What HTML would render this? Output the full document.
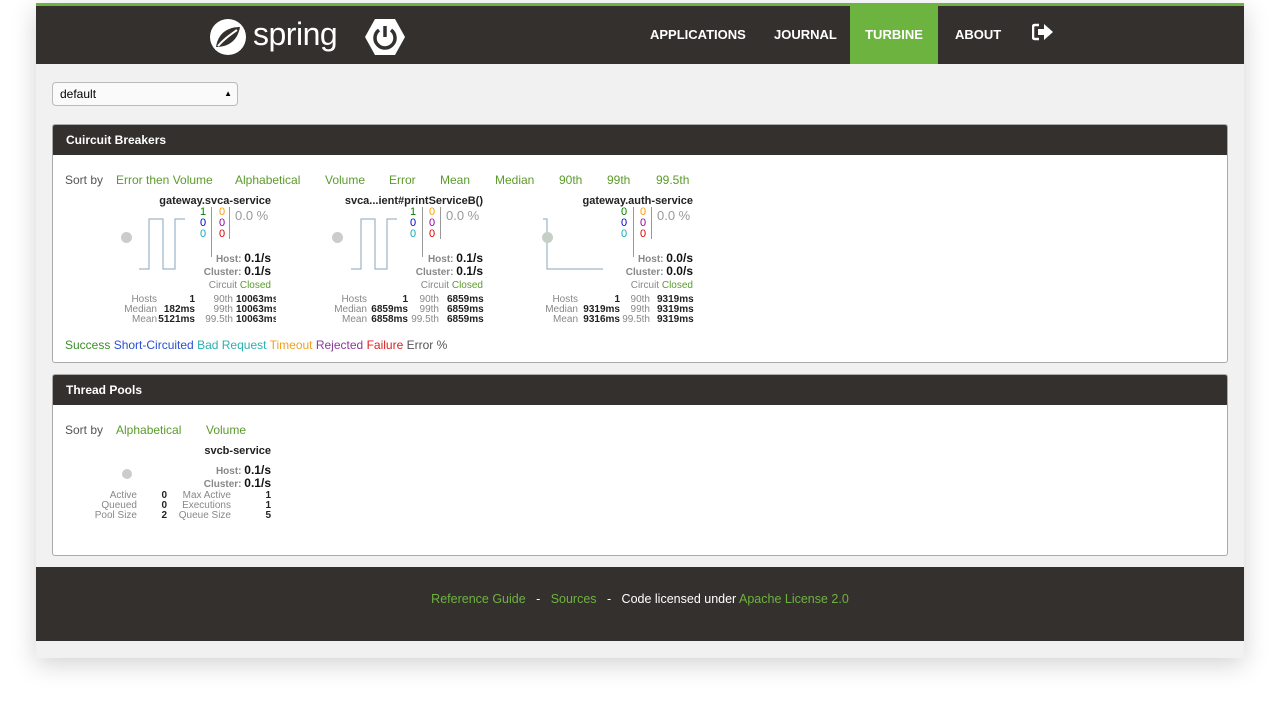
<!DOCTYPE html>
<html><head><style>
*{margin:0;padding:0;box-sizing:border-box}
body{width:1280px;height:701px;background:#fff;font-family:"Liberation Sans",sans-serif;position:relative;overflow:hidden}
.win{position:absolute;left:36px;top:3px;width:1208px;height:655px;background:#f1f1f1;box-shadow:0 6px 24px rgba(0,0,0,.18)}
.green{position:absolute;left:0;top:0;width:1208px;height:3px;background:#6db33f}
.hdr{position:absolute;left:0;top:3px;width:1208px;height:58px;background:#34302d}
.nav{position:absolute;top:0;height:58px;line-height:58px;color:#fff;font-weight:bold;font-size:13px}
.panel{position:absolute;left:16px;width:1176px;background:#fff;border:1px solid #aaa;border-radius:3px;overflow:hidden}
.ph{height:30px;background:#34302d;color:#fff;font-weight:bold;font-size:12px;line-height:30px;padding-left:13px}
.t{position:absolute;font-size:11px;white-space:nowrap}
.g{color:#5a9b2a}
.gr{color:#888}
.b{font-weight:bold;color:#222}
.r{text-align:right}
.foot{position:absolute;left:0;top:564px;width:1208px;height:74px;background:#34302d;color:#fff;font-size:12.5px;text-align:center;line-height:64px}
.foot a{color:#6db33f;text-decoration:none}
.dot{position:absolute;width:11px;height:11px;border-radius:50%;background:#ccc}
</style></head><body>
<div class="win">
<div class="green"></div>
<div class="hdr">
 <svg style="position:absolute;left:172px;top:11px" width="40" height="40" viewBox="0 0 40 40"><circle cx="20" cy="20" r="18" fill="#fff"/><path d="M8 30 C10 16 20 10 32 10 C30 22 22 30 8 30Z" fill="#34302d"/><path d="M10 29 C16 22 22 18 29 13" stroke="#fff" stroke-width="2" fill="none"/></svg>
 <div style="position:absolute;left:217px;top:10px;color:#fff;font-size:32px;letter-spacing:-0.5px">spring</div>
 <svg style="position:absolute;left:329px;top:12px" width="40" height="38" viewBox="0 0 40 38"><polygon points="10,1 30,1 40,19 30,37 10,37 0,19" fill="#fff"/><path d="M14 12 A10 10 0 1 0 26 12" stroke="#34302d" stroke-width="3.5" fill="none"/><line x1="20" y1="8" x2="20" y2="19" stroke="#34302d" stroke-width="3.5"/></svg>
 <div class="nav" style="left:614px">APPLICATIONS</div>
 <div class="nav" style="left:738px">JOURNAL</div>
 <div class="nav" style="left:814px;width:88px;background:#6db33f;text-align:center">TURBINE</div>
 <div class="nav" style="left:919px">ABOUT</div>
 <svg style="position:absolute;left:996px;top:17px" width="22" height="18" viewBox="0 0 22 18"><path d="M7 2H3Q1 2 1 4V14Q1 16 3 16H7" stroke="#fff" stroke-width="2.5" fill="none"/><path d="M6 6H12V1L21 9L12 17V12H6Z" fill="#fff"/></svg>
</div>
<div style="position:absolute;left:16px;top:79px;width:186px;height:24px;border:1px solid #bbb;border-radius:4px;background:#fafafa;font-size:12px;line-height:22px;padding-left:7px">default<span style="position:absolute;right:5px;font-size:8px;top:0">▲<br></span></div>

<div class="panel" style="top:121px;height:239px">
 <div class="ph">Cuircuit Breakers</div>
 <div class="t gr" style="left:12px;top:48px;font-size:12px;color:#555">Sort by</div>
 <div class="t g" style="left:63px;top:48px;font-size:12px;word-spacing:0">Error then Volume</div>
 <div class="t g" style="left:182px;top:48px;font-size:12px">Alphabetical</div>
 <div class="t g" style="left:272px;top:48px;font-size:12px">Volume</div>
 <div class="t g" style="left:336px;top:48px;font-size:12px">Error</div>
 <div class="t g" style="left:387px;top:48px;font-size:12px">Mean</div>
 <div class="t g" style="left:442px;top:48px;font-size:12px">Median</div>
 <div class="t g" style="left:506px;top:48px;font-size:12px">90th</div>
 <div class="t g" style="left:554px;top:48px;font-size:12px">99th</div>
 <div class="t g" style="left:603px;top:48px;font-size:12px">99.5th</div>

 <!-- monitor 1 -->
 <div class="t b r" style="left:80px;width:138px;top:70px">gateway.svca-service</div>
 <div class="dot" style="left:68px;top:107px"></div>
 <svg style="position:absolute;left:86px;top:92px" width="46" height="54"><path d="M0 52H10V2H24V52H36V2H46" stroke="#8aa4bd" fill="none"/></svg>
 <div class="t" style="left:147px;top:82px;line-height:11px;font-size:11px"><span style="color:green">1</span><br><span style="color:#00c">0</span><br><span style="color:#1ab">0</span></div>
 <div style="position:absolute;left:158px;top:82px;width:1px;height:50px;background:#999"></div>
 <div class="t" style="left:166px;top:82px;line-height:11px"><span style="color:#f90">0</span><br><span style="color:#909">0</span><br><span style="color:#d00">0</span></div>
 <div style="position:absolute;left:176px;top:82px;width:1px;height:32px;background:#999"></div>
 <div class="t" style="left:182px;top:83px;font-size:13px;color:#999">0.0 %</div>
 <div class="t r" style="left:80px;width:138px;top:126px;font-size:10px;color:#888"><b>Host:</b> <b style="font-size:12px;color:#111">0.1/s</b></div>
 <div class="t r" style="left:80px;width:138px;top:139px;font-size:10px;color:#888"><b>Cluster:</b> <b style="font-size:12px;color:#111">0.1/s</b></div>
 <div class="t r" style="left:80px;width:138px;top:155px;font-size:10px;color:#888">Circuit <span class="g">Closed</span></div>
 <div class="t gr r" style="left:60px;width:44px;top:170px;font-size:10px;line-height:10px">Hosts<br>Median<br>Mean</div>
 <div class="t b r" style="left:104px;width:38px;top:170px;font-size:10px;line-height:10px">1<br>182ms<br>5121ms</div>
 <div class="t gr r" style="left:140px;width:40px;top:170px;font-size:10px;line-height:10px">90th<br>99th<br>99.5th</div>
 <div class="t b" style="left:183px;width:40px;overflow:hidden;top:170px;font-size:10px;line-height:10px">10063ms<br>10063ms<br>10063ms</div>

 <!-- monitor 2 -->
 <div class="t b r" style="left:280px;width:150px;top:70px">svca...ient#printServiceB()</div>
 <div class="dot" style="left:279px;top:107px"></div>
 <svg style="position:absolute;left:298px;top:92px" width="46" height="54"><path d="M0 52H10V2H24V52H36V2H46" stroke="#8aa4bd" fill="none"/></svg>
 <div class="t" style="left:357px;top:82px;line-height:11px"><span style="color:green">1</span><br><span style="color:#00c">0</span><br><span style="color:#1ab">0</span></div>
 <div style="position:absolute;left:369px;top:82px;width:1px;height:50px;background:#999"></div>
 <div class="t" style="left:376px;top:82px;line-height:11px"><span style="color:#f90">0</span><br><span style="color:#909">0</span><br><span style="color:#d00">0</span></div>
 <div style="position:absolute;left:387px;top:82px;width:1px;height:32px;background:#999"></div>
 <div class="t" style="left:393px;top:83px;font-size:13px;color:#999">0.0 %</div>
 <div class="t r" style="left:290px;width:140px;top:126px;font-size:10px;color:#888"><b>Host:</b> <b style="font-size:12px;color:#111">0.1/s</b></div>
 <div class="t r" style="left:290px;width:140px;top:139px;font-size:10px;color:#888"><b>Cluster:</b> <b style="font-size:12px;color:#111">0.1/s</b></div>
 <div class="t r" style="left:290px;width:140px;top:155px;font-size:10px;color:#888">Circuit <span class="g">Closed</span></div>
 <div class="t gr r" style="left:270px;width:44px;top:170px;font-size:10px;line-height:10px">Hosts<br>Median<br>Mean</div>
 <div class="t b r" style="left:310px;width:45px;top:170px;font-size:10px;line-height:10px">1<br>6859ms<br>6858ms</div>
 <div class="t gr r" style="left:346px;width:40px;top:170px;font-size:10px;line-height:10px">90th<br>99th<br>99.5th</div>
 <div class="t b" style="left:394px;top:170px;font-size:10px;line-height:10px">6859ms<br>6859ms<br>6859ms</div>

 <!-- monitor 3 -->
 <div class="t b r" style="left:500px;width:140px;top:70px">gateway.auth-service</div>
 <svg style="position:absolute;left:490px;top:92px" width="60" height="54"><path d="M0 2H4V52H60" stroke="#8aa4bd" fill="none"/></svg>
 <div class="dot" style="left:489px;top:107px;background:#c4d0c6"></div>
 <div class="t" style="left:568px;top:82px;line-height:11px"><span style="color:green">0</span><br><span style="color:#00c">0</span><br><span style="color:#1ab">0</span></div>
 <div style="position:absolute;left:580px;top:82px;width:1px;height:50px;background:#999"></div>
 <div class="t" style="left:587px;top:82px;line-height:11px"><span style="color:#f90">0</span><br><span style="color:#909">0</span><br><span style="color:#d00">0</span></div>
 <div style="position:absolute;left:598px;top:82px;width:1px;height:32px;background:#999"></div>
 <div class="t" style="left:604px;top:83px;font-size:13px;color:#999">0.0 %</div>
 <div class="t r" style="left:500px;width:140px;top:126px;font-size:10px;color:#888"><b>Host:</b> <b style="font-size:12px;color:#111">0.0/s</b></div>
 <div class="t r" style="left:500px;width:140px;top:139px;font-size:10px;color:#888"><b>Cluster:</b> <b style="font-size:12px;color:#111">0.0/s</b></div>
 <div class="t r" style="left:500px;width:140px;top:155px;font-size:10px;color:#888">Circuit <span class="g">Closed</span></div>
 <div class="t gr r" style="left:481px;width:44px;top:170px;font-size:10px;line-height:10px">Hosts<br>Median<br>Mean</div>
 <div class="t b r" style="left:522px;width:45px;top:170px;font-size:10px;line-height:10px">1<br>9319ms<br>9316ms</div>
 <div class="t gr r" style="left:557px;width:40px;top:170px;font-size:10px;line-height:10px">90th<br>99th<br>99.5th</div>
 <div class="t b" style="left:604px;top:170px;font-size:10px;line-height:10px">9319ms<br>9319ms<br>9319ms</div>

 <div class="t" style="left:12px;top:213px;font-size:12px"><span style="color:#3a8e2a">Success</span> <span style="color:#2a4fd0">Short-Circuited</span> <span style="color:#2ab0b0">Bad Request</span> <span style="color:#f0a020">Timeout</span> <span style="color:#8a3a9a">Rejected</span> <span style="color:#e02020">Failure</span> <span style="color:#555">Error %</span></div>
</div>

<div class="panel" style="top:371px;height:182px">
 <div class="ph">Thread Pools</div>
 <div class="t" style="left:12px;top:48px;font-size:12px;color:#555">Sort by</div>
 <div class="t g" style="left:63px;top:48px;font-size:12px">Alphabetical</div>
 <div class="t g" style="left:153px;top:48px;font-size:12px">Volume</div>
 <div class="t b r" style="left:100px;width:118px;top:70px">svcb-service</div>
 <div class="dot" style="left:69px;top:94px;width:10px;height:10px"></div>
 <div class="t r" style="left:80px;width:138px;top:88px;font-size:10px;color:#888"><b>Host:</b> <b style="font-size:12px;color:#111">0.1/s</b></div>
 <div class="t r" style="left:80px;width:138px;top:101px;font-size:10px;color:#888"><b>Cluster:</b> <b style="font-size:12px;color:#111">0.1/s</b></div>
 <div class="t gr r" style="left:30px;width:54px;top:116px;font-size:10px;line-height:10px">Active<br>Queued<br>Pool Size</div>
 <div class="t b r" style="left:96px;width:18px;top:116px;font-size:10px;line-height:10px">0<br>0<br>2</div>
 <div class="t gr r" style="left:118px;width:60px;top:116px;font-size:10px;line-height:10px">Max Active<br>Executions<br>Queue Size</div>
 <div class="t b r" style="left:196px;width:22px;top:116px;font-size:10px;line-height:10px">1<br>1<br>5</div>
</div>

<div class="foot"><a>Reference Guide</a> &nbsp; - &nbsp; <a>Sources</a> &nbsp; - &nbsp; Code licensed under <a>Apache License 2.0</a></div>
</div>
</body></html>
